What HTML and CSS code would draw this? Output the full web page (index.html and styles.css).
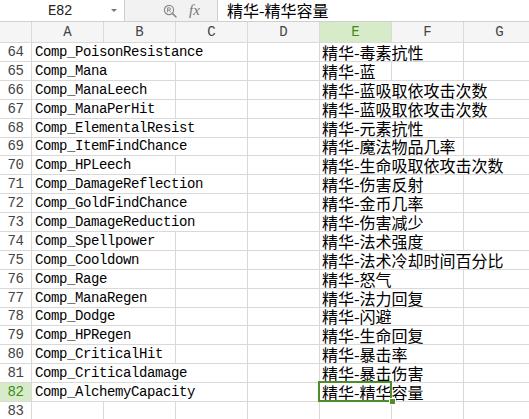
FILE: index.html
```html
<!DOCTYPE html>
<html lang="zh-CN">

<head>
    <meta charset="UTF-8">
    <meta name="viewport" content="width=device-width, initial-scale=1.0">
    <title>Sheet1</title>
    <link rel="stylesheet" href="styles.css">
</head>

<body>
    <div class="formula-bar">
        <div class="name-box">
            <span class="ref">E82</span>
            <span class="caret"></span>
        </div>
        <div class="tools">
            <svg class="lookup" width="15" height="14" viewBox="0 0 15 14">
                <circle cx="6" cy="6" r="4.6" fill="none" stroke="#8a8a8a" stroke-width="1.2" />
                <path d="M4.6 8.2V3.8h1.8a1.1 1.1 0 0 1 0 2.2H4.6M6.2 6l1.6 2.3" fill="none" stroke="#8a8a8a" stroke-width="1" />
                <path d="M9.4 9.4l3.6 3.6" stroke="#8a8a8a" stroke-width="1.6" stroke-linecap="round" />
            </svg>
            <span class="fx">fx</span>
        </div>
        <div class="formula">精华-精华容量</div>
    </div>

    <div class="sheet">
        <div class="row heads">
            <div class="corner"></div>
            <div class="head">A</div>
            <div class="head">B</div>
            <div class="head">C</div>
            <div class="head">D</div>
            <div class="head current">E</div>
            <div class="head">F</div>
            <div class="head">G</div>
        </div>

        <div class="row">
            <div class="num">64</div>
            <div class="cell en s3">Comp_PoisonResistance</div>
            <div class="cell"></div>
            <div class="cell zh s2">精华-毒素抗性</div>
            <div class="cell"></div>
        </div>
        <div class="row">
            <div class="num">65</div>
            <div class="cell en s2">Comp_Mana</div>
            <div class="cell"></div>
            <div class="cell"></div>
            <div class="cell zh">精华-蓝</div>
            <div class="cell"></div>
            <div class="cell"></div>
        </div>
        <div class="row">
            <div class="num">66</div>
            <div class="cell en s2">Comp_ManaLeech</div>
            <div class="cell"></div>
            <div class="cell"></div>
            <div class="cell zh s3">精华-蓝吸取依攻击次数</div>
        </div>
        <div class="row">
            <div class="num">67</div>
            <div class="cell en s2">Comp_ManaPerHit</div>
            <div class="cell"></div>
            <div class="cell"></div>
            <div class="cell zh s3">精华-蓝吸取依攻击次数</div>
        </div>
        <div class="row">
            <div class="num">68</div>
            <div class="cell en s3">Comp_ElementalResist</div>
            <div class="cell"></div>
            <div class="cell zh s2">精华-元素抗性</div>
            <div class="cell"></div>
        </div>
        <div class="row">
            <div class="num">69</div>
            <div class="cell en s3">Comp_ItemFindChance</div>
            <div class="cell"></div>
            <div class="cell zh s2">精华-魔法物品几率</div>
            <div class="cell"></div>
        </div>
        <div class="row">
            <div class="num">70</div>
            <div class="cell en s2">Comp_HPLeech</div>
            <div class="cell"></div>
            <div class="cell"></div>
            <div class="cell zh s3">精华-生命吸取依攻击次数</div>
        </div>
        <div class="row">
            <div class="num">71</div>
            <div class="cell en s3">Comp_DamageReflection</div>
            <div class="cell"></div>
            <div class="cell zh s2">精华-伤害反射</div>
            <div class="cell"></div>
        </div>
        <div class="row">
            <div class="num">72</div>
            <div class="cell en s3">Comp_GoldFindChance</div>
            <div class="cell"></div>
            <div class="cell zh s2">精华-金币几率</div>
            <div class="cell"></div>
        </div>
        <div class="row">
            <div class="num">73</div>
            <div class="cell en s3">Comp_DamageReduction</div>
            <div class="cell"></div>
            <div class="cell zh s2">精华-伤害减少</div>
            <div class="cell"></div>
        </div>
        <div class="row">
            <div class="num">74</div>
            <div class="cell en s2">Comp_Spellpower</div>
            <div class="cell"></div>
            <div class="cell"></div>
            <div class="cell zh s2">精华-法术强度</div>
            <div class="cell"></div>
        </div>
        <div class="row">
            <div class="num">75</div>
            <div class="cell en s2">Comp_Cooldown</div>
            <div class="cell"></div>
            <div class="cell"></div>
            <div class="cell zh s3">精华-法术冷却时间百分比</div>
        </div>
        <div class="row">
            <div class="num">76</div>
            <div class="cell en s2">Comp_Rage</div>
            <div class="cell"></div>
            <div class="cell"></div>
            <div class="cell zh s2">精华-怒气</div>
            <div class="cell"></div>
        </div>
        <div class="row">
            <div class="num">77</div>
            <div class="cell en s2">Comp_ManaRegen</div>
            <div class="cell"></div>
            <div class="cell"></div>
            <div class="cell zh s2">精华-法力回复</div>
            <div class="cell"></div>
        </div>
        <div class="row">
            <div class="num">78</div>
            <div class="cell en s2">Comp_Dodge</div>
            <div class="cell"></div>
            <div class="cell"></div>
            <div class="cell zh s2">精华-闪避</div>
            <div class="cell"></div>
        </div>
        <div class="row">
            <div class="num">79</div>
            <div class="cell en s2">Comp_HPRegen</div>
            <div class="cell"></div>
            <div class="cell"></div>
            <div class="cell zh s2">精华-生命回复</div>
            <div class="cell"></div>
        </div>
        <div class="row">
            <div class="num">80</div>
            <div class="cell en s2">Comp_CriticalHit</div>
            <div class="cell"></div>
            <div class="cell"></div>
            <div class="cell zh s2">精华-暴击率</div>
            <div class="cell"></div>
        </div>
        <div class="row">
            <div class="num">81</div>
            <div class="cell en s3">Comp_Criticaldamage</div>
            <div class="cell"></div>
            <div class="cell zh s2">精华-暴击伤害</div>
            <div class="cell"></div>
        </div>
        <div class="row active">
            <div class="num">82</div>
            <div class="cell en s3">Comp_AlchemyCapacity</div>
            <div class="cell"></div>
            <div class="cell zh s2 selected">精华-精华容量</div>
            <div class="cell"></div>
        </div>
        <div class="row">
            <div class="num">83</div>
            <div class="cell"></div>
            <div class="cell"></div>
            <div class="cell"></div>
            <div class="cell"></div>
            <div class="cell"></div>
            <div class="cell"></div>
            <div class="cell"></div>
        </div>
    </div>
</body>

</html>
```

FILE: styles.css
```css
body {
    margin: 0;
    padding: 0;
    width: 529px;
    height: 419px;
    overflow: hidden;
    background-color: #fff;
    color: #000;
    font-family: "Liberation Mono", monospace;
}

/* name box + formula input */
.formula-bar {
    display: flex;
    height: 21px;
    border-bottom: 1px solid #cfcfcf;
    background-color: #f2f2f2;
}

.name-box {
    position: relative;
    width: 124px;
    display: flex;
    align-items: center;
    justify-content: center;
    background-color: #fff;
    border-right: 1px solid #cfcfcf;
}

.name-box .ref {
    font-size: 14px;
    letter-spacing: -0.4px;
    color: #222;
    margin-right: 4px;
}

.caret {
    position: absolute;
    right: 7px;
    top: 9px;
    border-left: 3px solid transparent;
    border-right: 3px solid transparent;
    border-top: 3px solid #777;
}

.tools {
    width: 92px;
    display: flex;
    align-items: center;
    padding-left: 38px;
    box-sizing: border-box;
}

.lookup {
    margin-right: 11px;
}

.fx {
    font-family: "Liberation Serif", serif;
    font-style: italic;
    font-size: 15px;
    color: #777;
}

.formula {
    flex: 1;
    background-color: #fff;
    border-left: 1px solid #cfcfcf;
    padding-left: 9px;
    font-family: "Noto Sans CJK SC", sans-serif;
    font-size: 16px;
    line-height: 21px;
    white-space: nowrap;
}

/* grid */
.sheet {
    display: flex;
    flex-direction: column;
}

.row {
    display: grid;
    grid-template-columns: 32px repeat(7, 72px);
    height: 18.9px;
}

.row.heads {
    height: 21px;
    background-color: #f5f5f5;
}

.corner,
.head,
.num,
.cell {
    box-sizing: border-box;
    border-right: 1px solid #d9d9d9;
    border-bottom: 1px solid #d9d9d9;
    white-space: nowrap;
}

.head {
    text-align: center;
    font-size: 14px;
    line-height: 20px;
    color: #444;
}

.head.current {
    background-color: #d8ebc8;
    color: #3f8a1f;
}

.num {
    text-align: center;
    font-size: 14px;
    letter-spacing: -0.4px;
    line-height: 18px;
    color: #444;
}

.row.active .num {
    background-color: #d8ebc8;
    color: #3f8a1f;
}

.cell {
    padding-left: 3px;
    line-height: 18px;
}

.en {
    font-size: 14px;
    letter-spacing: -0.4px;
}

.zh {
    font-family: "Noto Sans CJK SC", sans-serif;
    font-size: 16px;
    padding-left: 2px;
}

.s2 {
    grid-column: span 2;
}

.s3 {
    grid-column: span 3;
}

/* active cell frame and fill handle */
.selected {
    position: relative;
}

.selected::after {
    content: "";
    position: absolute;
    left: -2px;
    top: -2px;
    width: 74px;
    height: 21px;
    box-sizing: border-box;
    border: 2px solid #4f8c2a;
}

.selected::before {
    content: "";
    position: absolute;
    left: 69px;
    top: 15px;
    width: 5px;
    height: 5px;
    background-color: #4f8c2a;
    border: 1px solid #fff;
    z-index: 1;
}
```
